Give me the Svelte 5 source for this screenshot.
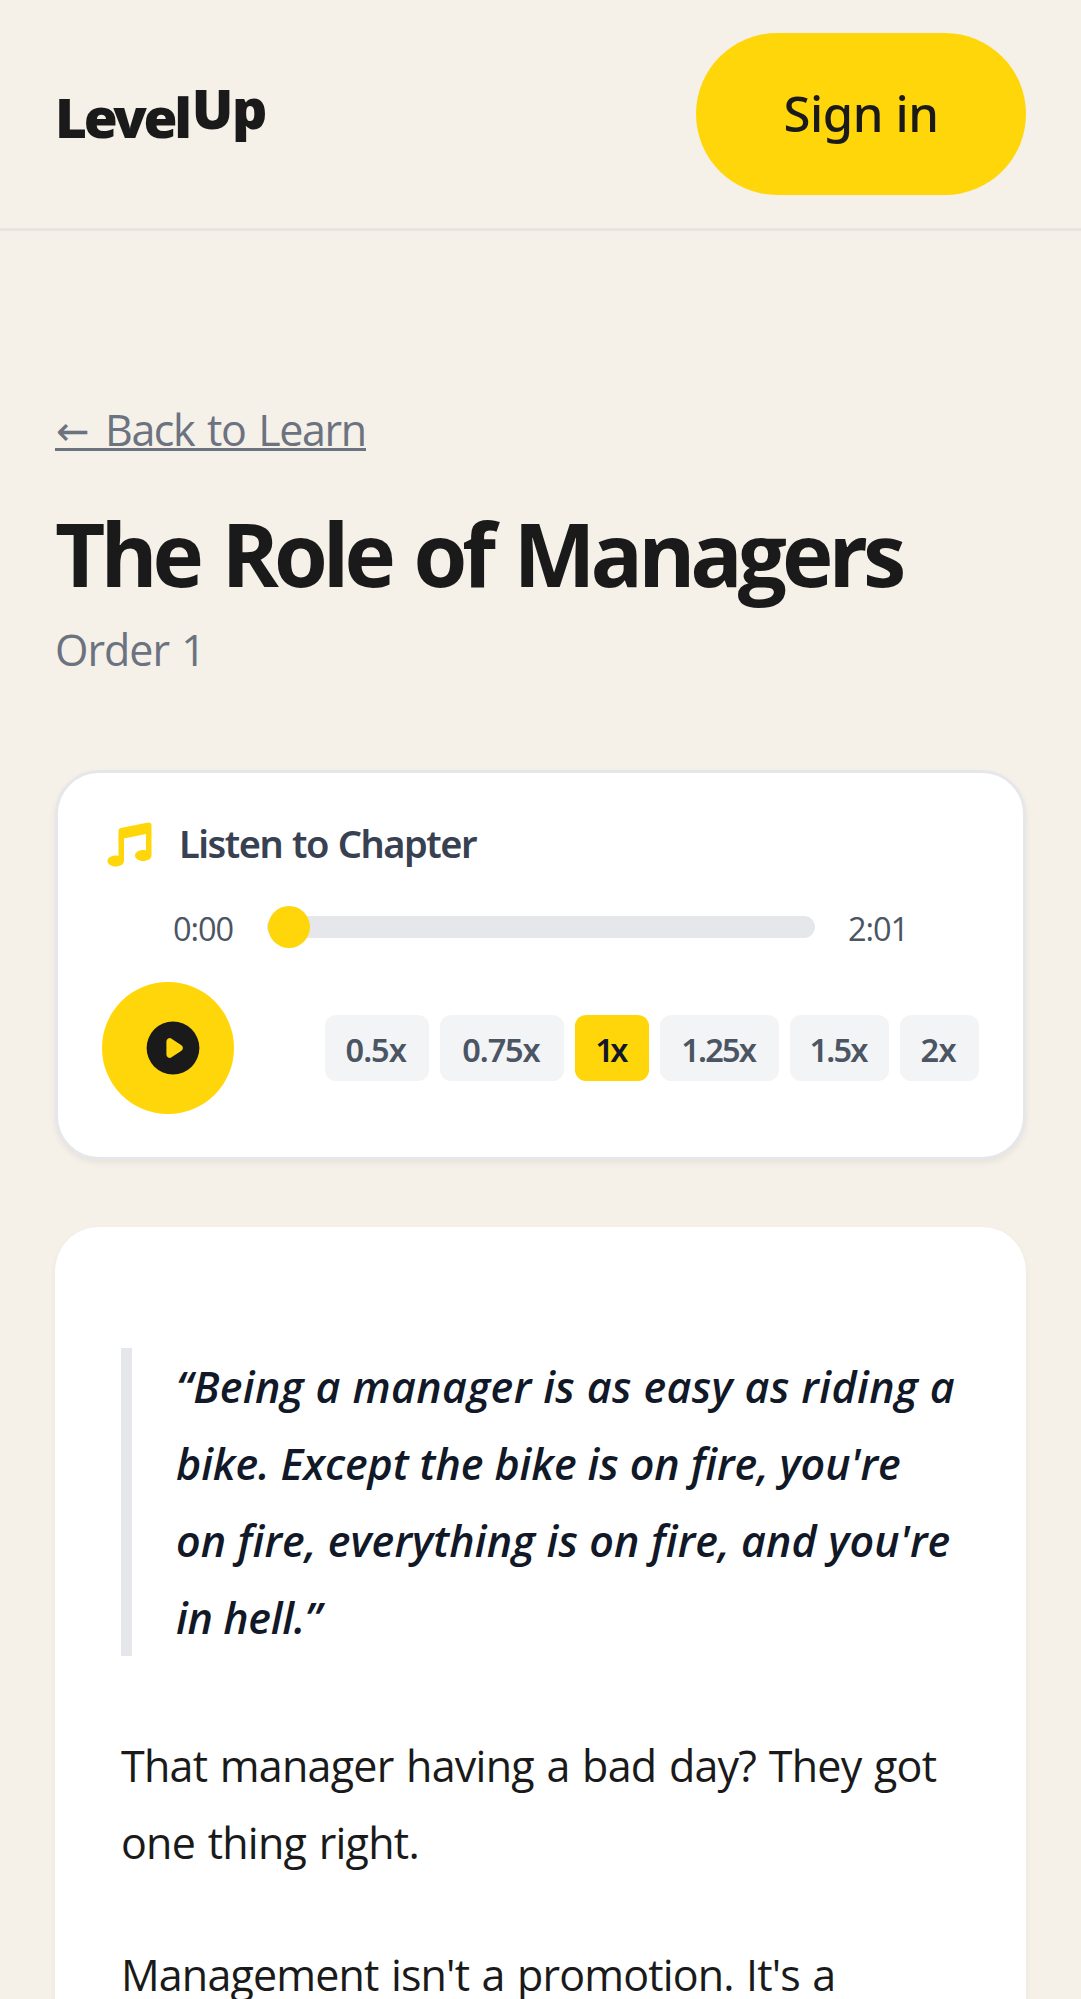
<script>
  const speeds = [
    { label: '0.5x', width: 104.5, spacing: -1 },
    { label: '0.75x', width: 124, spacing: -1.1 },
    { label: '1x', width: 74, spacing: -3.6, active: true },
    { label: '1.25x', width: 118.5, spacing: -1.8 },
    { label: '1.5x', width: 99, spacing: -1.8 },
    { label: '2x', width: 79.5, spacing: -0.7 }
  ];

  const quote = [
    { text: '“Being a manager is as easy as riding a', spacing: 0.38 },
    { text: "bike. Except the bike is on fire, you're", spacing: -0.09 },
    { text: "on fire, everything is on fire, and you're", spacing: 0.12 },
    { text: 'in hell.”', spacing: -0.35 }
  ];
</script>

<div class="page">
  <header>
    <div class="logo"><span class="level">Level</span><span class="up">Up</span></div>
    <button class="signin">Sign in</button>
  </header>

  <main>
    <a class="back" href="#learn"><span class="arrow">←</span><span>Back to Learn</span></a>
    <h1>The Role of Managers</h1>
    <p class="order">Order 1</p>

    <section class="player">
      <div class="heading">
        <svg class="note" viewBox="0 0 20 20" fill="currentColor">
          <path d="M18 3a1 1 0 00-1.196-.98l-10 2A1 1 0 006 5v9.114A4.369 4.369 0 005 14c-1.657 0-3 .895-3 2s1.343 2 3 2 3-.895 3-2V7.82l8-1.6v5.894A4.37 4.37 0 0015 12c-1.657 0-3 .895-3 2s1.343 2 3 2 3-.895 3-2V3z" />
        </svg>
        <span class="title">Listen to Chapter</span>
      </div>
      <div class="progress">
        <span class="time">0:00</span>
        <div class="track"><div class="thumb"></div></div>
        <span class="time">2:01</span>
      </div>
      <div class="controls">
        <button class="play" aria-label="Play">
          <svg viewBox="0 0 20 20" fill="currentColor">
            <path fill-rule="evenodd" clip-rule="evenodd" d="M10 18a8 8 0 100-16 8 8 0 000 16zM9.555 7.168A1 1 0 008 8v4a1 1 0 001.555.832l3-2a1 1 0 000-1.664l-3-2z" />
          </svg>
        </button>
        <div class="speeds">
          {#each speeds as s}
            <button class="speed" class:active={s.active} style="width:{s.width}px;letter-spacing:{s.spacing}px">{s.label}</button>
          {/each}
        </div>
      </div>
    </section>

    <article>
      <blockquote>
        {#each quote as line}
          <div style="letter-spacing:{line.spacing}px">{line.text}</div>
        {/each}
      </blockquote>
      <p>That manager having a bad day? They got<br />one thing right.</p>
      <p class="tight">Management isn't a promotion. It's a</p>
    </article>
  </main>
</div>

<style>
  :global(body) {
    background: #f5f0e8;
  }
  .page {
    height: 1999px;
    overflow: hidden;
    background: #f5f0e8;
    color: #1a1a1a;
    font-family: 'Open Sans', 'Noto Sans', sans-serif;
    font-size: 43px;
  }
  .page * {
    box-sizing: border-box;
  }
  button {
    border: 0;
    padding: 0;
    font-family: 'Noto Sans', sans-serif;
    white-space: nowrap;
  }
  header {
    display: flex;
    align-items: center;
    justify-content: space-between;
    height: 231px;
    padding: 0 55px;
    border-bottom: 3px solid #e9e4dd;
  }
  .logo {
    display: flex;
    font-family: 'Noto Sans', sans-serif;
    font-weight: 900;
    font-size: 55px;
    line-height: 74px;
    padding-top: 5px;
  }
  .level {
    letter-spacing: -3.3px;
  }
  .up {
    margin-left: 3px;
    letter-spacing: -1.5px;
    transform: translateY(-9px);
  }
  .signin {
    width: 330px;
    height: 162px;
    padding-bottom: 2px;
    border-radius: 81px;
    background: #ffd60a;
    color: #1a1a1a;
    font-size: 49px;
    font-weight: 500;
    letter-spacing: -0.4px;
  }
  main {
    display: flex;
    flex-direction: column;
    align-items: flex-start;
    padding: 163px 55px 0;
  }
  .back {
    display: flex;
    width: 311px;
    height: 57px;
    line-height: 71px;
    color: #6b7280;
    letter-spacing: -1.4px;
    word-spacing: 3px;
    text-decoration: none;
    border-bottom: 3px solid #6b7280;
    white-space: nowrap;
  }
  .arrow {
    flex: none;
    width: 50px;
    padding-left: 1px;
    font-family: 'DejaVu Sans', sans-serif;
    font-size: 40px;
    line-height: 74px;
  }
  h1 {
    margin: 47px 0 0;
    font-size: 87px;
    line-height: 110px;
    font-weight: 700;
    letter-spacing: -5px;
    word-spacing: 5px;
    white-space: nowrap;
  }
  .order {
    margin: 6px 0 0;
    line-height: 71px;
    color: #6b7280;
    letter-spacing: -1px;
    word-spacing: 2px;
  }
  .player {
    width: 971px;
    height: 390px;
    margin-top: 85px;
    padding: 43px 44px 0 44px;
    border: 3px solid #e5e7eb;
    border-radius: 44px;
    background: #fff;
    box-shadow: 0 3px 6px rgba(0, 0, 0, 0.06);
  }
  .heading {
    display: flex;
    align-items: center;
    gap: 22px;
    height: 56px;
    color: #374151;
    font-family: 'Noto Sans', sans-serif;
    font-size: 38px;
    font-weight: 600;
    letter-spacing: -1.5px;
    word-spacing: 1.5px;
  }
  .title {
    padding-bottom: 2px;
  }
  .note {
    width: 55px;
    height: 55px;
    color: #ffd60a;
  }
  .progress {
    display: flex;
    align-items: center;
    gap: 33px;
    height: 42px;
    margin-top: 34px;
    padding: 0 70px 0 71px;
    color: #4b5563;
    font-size: 32.5px;
    letter-spacing: -1.1px;
  }
  .time {
    width: 61px;
    line-height: 42px;
    padding-top: 3px;
  }
  .track {
    flex: 1;
    display: flex;
    align-items: center;
    height: 22px;
    padding-left: 1px;
    border-radius: 11px;
    background: #e5e7eb;
  }
  .thumb {
    width: 42px;
    height: 42px;
    border-radius: 50%;
    background: #ffd60a;
  }
  .controls {
    display: flex;
    align-items: center;
    justify-content: space-between;
    margin-top: 34px;
  }
  .play {
    display: flex;
    align-items: center;
    justify-content: center;
    width: 132px;
    height: 132px;
    padding-left: 10px;
    border-radius: 50%;
    background: #ffd60a;
    color: #1a1a1a;
  }
  .play svg {
    width: 66px;
    height: 66px;
  }
  .speeds {
    display: flex;
    gap: 11px;
  }
  .speed {
    height: 66px;
    padding: 3px 2px 0 0;
    border-radius: 11px;
    background: #f3f4f6;
    color: #4b5563;
    font-size: 32.5px;
    font-weight: 570;
  }
  .speed.active {
    padding-right: 4px;
    background: #ffd60a;
    color: #111827;
  }
  article {
    width: 971px;
    height: 900px;
    margin-top: 67px;
    padding: 121px 66px 0;
    border-radius: 44px;
    background: #fff;
    box-shadow: 0 3px 6px rgba(0, 0, 0, 0.05);
    line-height: 77px;
    white-space: nowrap;
  }
  blockquote {
    margin: 0 0 71px;
    padding-left: 44px;
    border-left: 11px solid #e5e7eb;
    color: #111827;
    font-style: italic;
    font-weight: 600;
  }
  article p {
    margin: 0 0 55px;
    letter-spacing: -0.75px;
    word-spacing: 2.1px;
  }
  article .tight {
    letter-spacing: -0.85px;
  }
</style>
